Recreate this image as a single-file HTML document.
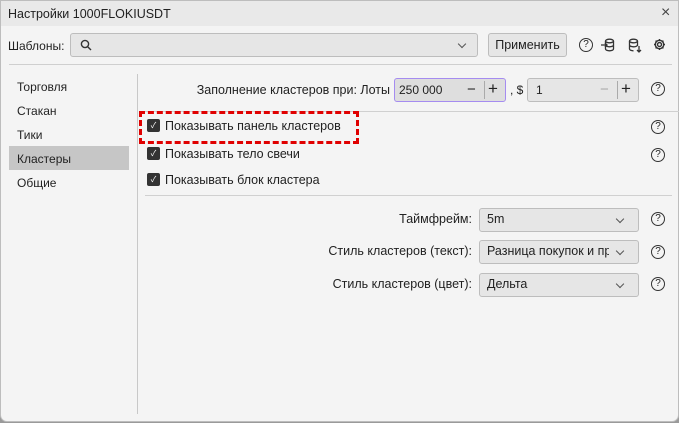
<!DOCTYPE html><html><head><style>
body{margin:0;width:679px;height:423px;background:#9a9a9a;font-family:"Liberation Sans","Noto Sans CJK SC",sans-serif;font-size:12px;color:#222;position:relative;overflow:hidden}
.win{position:absolute;left:0;top:0;width:677px;height:420px;background:#f4f4f4;border:1px solid #bdbdbd;border-radius:0 0 7px 7px}
.a{position:absolute;white-space:nowrap}
.r{position:absolute;white-space:nowrap;text-align:right;font-size:12.5px}
.box{position:absolute;background:#e6e6e6;border:1px solid #bdbdbd;border-radius:3px;box-sizing:border-box}
.help{position:absolute;width:12px;height:12px;border:1.4px solid #333;border-radius:50%;font-size:10px;line-height:12px;text-align:center}
.cb{position:absolute;width:13px;height:13px;background:#333;border-radius:2px;color:#fff;font-size:8px;line-height:13px;text-align:center}
.chev{position:absolute;width:5px;height:5px;border-right:1.2px solid #555;border-bottom:1.2px solid #555;transform:rotate(45deg)}
</style></head><body><div class="win">
<div class="a" style="left:0;top:0;width:677px;height:25px;background:#e9e9e9"></div>
<div class="a" style="left:7px;top:6px;font-size:12.5px">Настройки 1000FLOKIUSDT</div>
<div class="a" style="left:660px;top:3px;font-size:16px;color:#444">×</div>
<div class="a" style="left:7px;top:38px">Шаблоны:</div>
<div class="box" style="left:69px;top:32px;width:408px;height:24px"></div>
<svg class="a" style="left:79px;top:38px" width="12" height="12"><circle cx="5" cy="5" r="3.6" fill="none" stroke="#333" stroke-width="1.4"/><line x1="7.7" y1="7.7" x2="11" y2="11" stroke="#333" stroke-width="1.4"/></svg>
<div class="chev" style="left:458px;top:40px"></div>
<div class="box" style="left:487px;top:32px;width:79px;height:24px;text-align:center;line-height:22px;font-size:12.5px">Применить</div>
<div class="help" style="left:578px;top:37px">?</div>
<svg class="a" style="left:600px;top:37px" width="14" height="14" fill="none" stroke="#333" stroke-width="1.3"><ellipse cx="8.5" cy="3" rx="4" ry="1.8"/><path d="M4.5 3v8c0 1 1.8 1.8 4 1.8s4-.8 4-1.8V3M4.5 7c0 1 1.8 1.8 4 1.8s4-.8 4-1.8"/><path d="M0 7h6M4 5l2 2-2 2"/></svg>
<svg class="a" style="left:627px;top:37px" width="14" height="15" fill="none" stroke="#333" stroke-width="1.3"><ellipse cx="5.5" cy="3" rx="4" ry="1.8"/><path d="M1.5 3v8c0 1 1.8 1.8 4 1.8M9.5 3v5M1.5 7c0 1 1.8 1.8 4 1.8s4-.8 4-1.8M11 8v6M9 12l2 2 2-2"/></svg>
<svg class="a" style="left:652px;top:37px" width="13" height="13" fill="none" stroke="#333" stroke-width="1.4"><circle cx="6.5" cy="6.5" r="2"/><path d="M6.5 1v2M6.5 10v2M1 6.5h2M10 6.5h2M2.6 2.6l1.4 1.4M9 9l1.4 1.4M2.6 10.4L4 9M9 4l1.4-1.4"/><circle cx="6.5" cy="6.5" r="4.2"/></svg>
<div class="a" style="left:8px;top:63px;width:663px;height:1px;background:#cfcfcf"></div>
<div class="a" style="left:136px;top:73px;width:1px;height:340px;background:#c8c8c8"></div>
<div class="a" style="left:8px;top:145px;width:120px;height:24px;background:#c6c6c6"></div>
<div class="a" style="left:16px;top:79px">Торговля</div>
<div class="a" style="left:16px;top:103px">Стакан</div>
<div class="a" style="left:16px;top:127px">Тики</div>
<div class="a" style="left:16px;top:151px">Кластеры</div>
<div class="a" style="left:16px;top:175px">Общие</div>
<div class="r" style="right:288px;top:82px">Заполнение кластеров при: Лоты</div>
<div class="box" style="left:393px;top:77px;width:112px;height:24px;border-color:#a58cf0;background:#dedede"></div>
<div class="a" style="left:398px;top:82px">250 000</div>
<div class="a" style="left:466px;top:82px;font-size:15px;line-height:14px">−</div>
<div class="a" style="left:483px;top:80px;width:1px;height:18px;background:#aaa"></div>
<div class="a" style="left:487px;top:80px;font-size:17px;line-height:16px">+</div>
<div class="a" style="left:509px;top:82px">, $</div>
<div class="box" style="left:526px;top:77px;width:112px;height:24px"></div>
<div class="a" style="left:535px;top:82px">1</div>
<div class="a" style="left:599px;top:82px;font-size:15px;line-height:14px;color:#aaa">−</div>
<div class="a" style="left:616px;top:80px;width:1px;height:18px;background:#aaa"></div>
<div class="a" style="left:620px;top:80px;font-size:17px;line-height:16px">+</div>
<div class="help" style="left:650px;top:81px">?</div>
<div class="a" style="left:144px;top:110px;width:535px;height:1px;background:#d0d0d0"></div>
<div class="a" style="left:138px;top:110px;width:214px;height:27px;border:3px dashed #e00000"></div>
<div class="cb" style="left:146px;top:118px">✓</div><div class="a" style="left:164px;top:118px;font-size:12.5px">Показывать панель кластеров</div>
<div class="cb" style="left:146px;top:146px">✓</div><div class="a" style="left:164px;top:146px;font-size:12.5px">Показывать тело свечи</div>
<div class="cb" style="left:146px;top:172px">✓</div><div class="a" style="left:164px;top:172px;font-size:12.5px">Показывать блок кластера</div>
<div class="help" style="left:650px;top:119px">?</div>
<div class="help" style="left:650px;top:147px">?</div>
<div class="a" style="left:144px;top:194px;width:527px;height:1px;background:#d0d0d0"></div>
<div class="r" style="right:206px;top:211px">Таймфрейм:</div>
<div class="box" style="left:478px;top:207px;width:160px;height:24px"></div><div class="a" style="left:486px;top:211px;font-size:12.5px">5m</div><div class="chev" style="left:616px;top:215px"></div>
<div class="help" style="left:650px;top:211px">?</div>
<div class="r" style="right:206px;top:243px">Стиль кластеров (текст):</div>
<div class="box" style="left:478px;top:239px;width:160px;height:24px;overflow:hidden"></div><div class="a" style="left:486px;top:243px;font-size:12.5px;width:122px;overflow:hidden">Разница покупок и пр</div><div class="chev" style="left:616px;top:247px"></div>
<div class="help" style="left:650px;top:244px">?</div>
<div class="r" style="right:206px;top:276px">Стиль кластеров (цвет):</div>
<div class="box" style="left:478px;top:272px;width:160px;height:24px"></div><div class="a" style="left:486px;top:276px;font-size:12.5px">Дельта</div><div class="chev" style="left:616px;top:280px"></div>
<div class="help" style="left:650px;top:276px">?</div>
</div></body></html>
